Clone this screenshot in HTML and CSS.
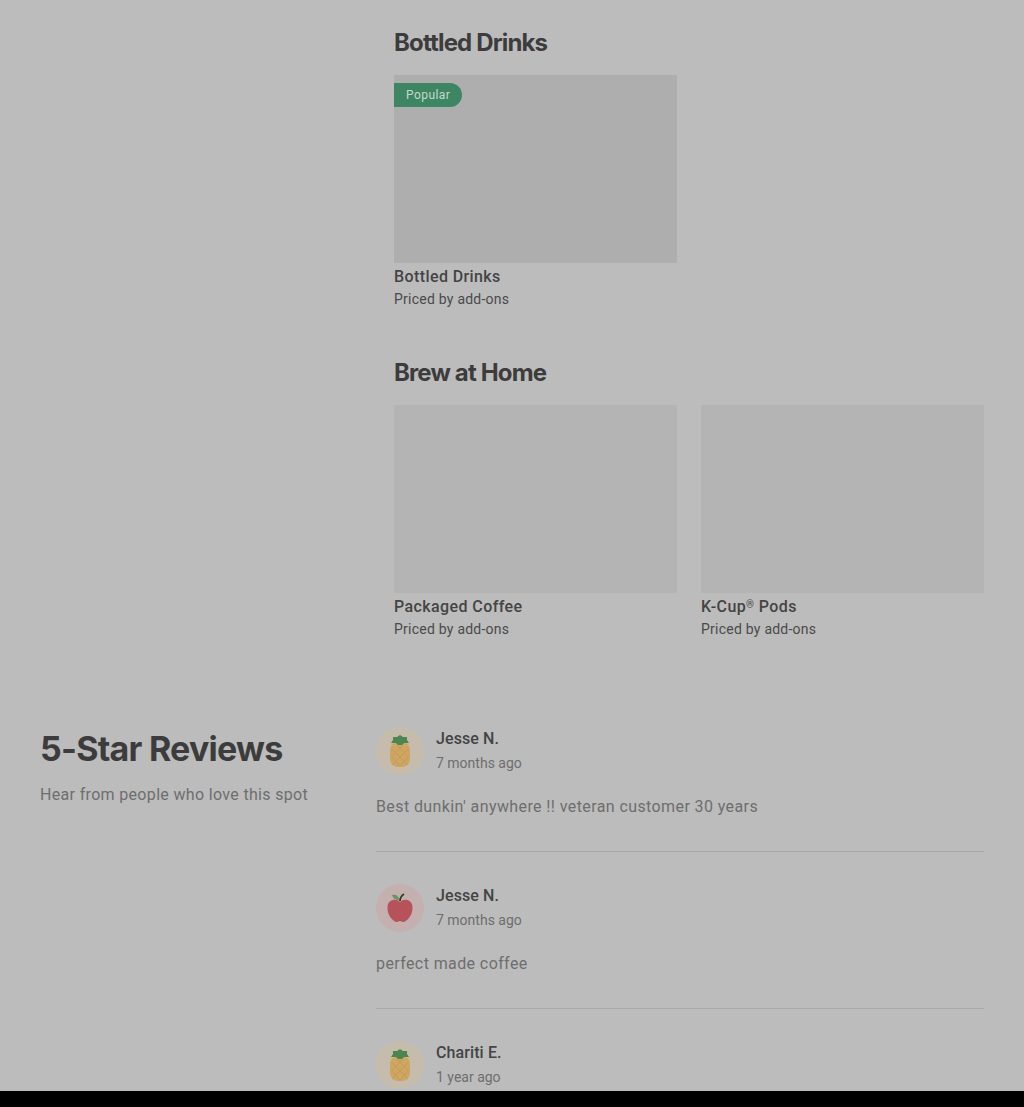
FILE: index.html
```html
<!DOCTYPE html>
<html>
<head>
    <title>Menu and Reviews</title>
    <link rel="stylesheet" href="styles.css">
</head>
<body>
    <div class="page">
        <div class="menu">
            <section class="menu-section">
                <h2>Bottled Drinks</h2>
                <div class="menu-grid">
                    <div class="item">
                        <div class="item-image image-dark"><span class="badge">Popular</span></div>
                        <div class="item-name">Bottled Drinks</div>
                        <div class="item-price">Priced by add-ons</div>
                    </div>
                </div>
            </section>
            <section class="menu-section">
                <h2>Brew at Home</h2>
                <div class="menu-grid">
                    <div class="item">
                        <div class="item-image"></div>
                        <div class="item-name">Packaged Coffee</div>
                        <div class="item-price">Priced by add-ons</div>
                    </div>
                    <div class="item">
                        <div class="item-image"></div>
                        <div class="item-name">K-Cup<span class="reg">®</span> Pods</div>
                        <div class="item-price">Priced by add-ons</div>
                    </div>
                </div>
            </section>
        </div>

        <div class="reviews">
            <div class="reviews-intro">
                <h1>5-Star Reviews</h1>
                <p>Hear from people who love this spot</p>
            </div>
            <div class="reviews-list">
                <div class="review">
                    <div class="review-head">
                        <div class="avatar avatar-pineapple">
                            <svg width="24" height="34" viewBox="0 0 24 34">
                                <rect x="2" y="8" width="20" height="25" rx="8" fill="#cfa562"/>
                                <path d="M4 15 L20 31 M4 23 L12 32 M9 11 L21 23 M20 15 L4 31 M20 23 L12 32 M15 11 L3 23" stroke="#c39a58" stroke-width="1"/>
                                <path d="M12 1 L15 3 L19 3 L19 6 L21 9 L16 9 L14 11 L10 11 L8 9 L3 9 L5 6 L5 3 L9 3 Z" fill="#4c8550"/>
                            </svg>
                        </div>
                        <div>
                            <div class="review-name">Jesse N.</div>
                            <div class="review-date">7 months ago</div>
                        </div>
                    </div>
                    <p class="review-text">Best dunkin' anywhere !! veteran customer 30 years</p>
                </div>
                <div class="review">
                    <div class="review-head">
                        <div class="avatar avatar-apple">
                            <svg width="28" height="30" viewBox="0 0 28 30">
                                <path d="M14 9 C10 5 2 6 1.500 14 C1 22 7 29 11 29 C12.500 29 13 28 14 28 C15 28 15.500 29 17 29 C21 29 27 22 26.500 14 C26 6 18 5 14 9 Z" fill="#b5525a"/>
                                <path d="M14 8 C14 5 15 3 18 1" stroke="#3a3a32" stroke-width="1.800" fill="none"/>
                                <path d="M13 7 C9 7 7 5 6 2 C10 1 13 3 13 7 Z" fill="#6b9560"/>
                            </svg>
                        </div>
                        <div>
                            <div class="review-name">Jesse N.</div>
                            <div class="review-date">7 months ago</div>
                        </div>
                    </div>
                    <p class="review-text">perfect made coffee</p>
                </div>
                <div class="review">
                    <div class="review-head">
                        <div class="avatar avatar-pineapple">
                            <svg width="24" height="34" viewBox="0 0 24 34">
                                <rect x="2" y="8" width="20" height="25" rx="8" fill="#cfa562"/>
                                <path d="M4 15 L20 31 M4 23 L12 32 M9 11 L21 23 M20 15 L4 31 M20 23 L12 32 M15 11 L3 23" stroke="#c39a58" stroke-width="1"/>
                                <path d="M12 1 L15 3 L19 3 L19 6 L21 9 L16 9 L14 11 L10 11 L8 9 L3 9 L5 6 L5 3 L9 3 Z" fill="#4c8550"/>
                            </svg>
                        </div>
                        <div>
                            <div class="review-name">Chariti E.</div>
                            <div class="review-date">1 year ago</div>
                        </div>
                    </div>
                </div>
            </div>
        </div>
    </div>
    <div class="bottom-bar"></div>
</body>
</html>
```

FILE: styles.css
```css
body {
    margin: 0;
    font-family: Roboto, "Liberation Sans", sans-serif;
    background-color: #bcbcbc;
    color: #3c3c3c;
}
.page {
    height: 1091px;
    overflow: hidden;
}
.bottom-bar {
    height: 16px;
    background-color: #000;
}
.menu {
    padding: 26px 40px 0 394px;
}
.menu-section {
    margin-bottom: 46px;
}
.menu-section h2 {
    margin: 0 0 16px;
    font-family: Inter, sans-serif;
    font-size: 24px;
    line-height: 33px;
    font-weight: 700;
    letter-spacing: -0.85px;
}
.menu-grid {
    display: grid;
    grid-template-columns: 283px 283px;
    column-gap: 24px;
}
.item-image {
    height: 188px;
    background-color: #b4b4b4;
    padding-top: 8px;
    box-sizing: border-box;
}
.image-dark {
    background-color: #aeaeae;
}
.badge {
    display: block;
    width: 68px;
    height: 24px;
    box-sizing: border-box;
    padding-left: 12px;
    background-color: #3e8663;
    border-radius: 0 12px 12px 0;
    color: #c4d8cc;
    font-size: 12px;
    line-height: 24px;
    letter-spacing: 0.45px;
}
.item-name {
    margin-top: 3px;
    font-size: 16px;
    line-height: 22px;
    font-weight: 500;
    letter-spacing: 0.4px;
    color: #444;
}
.reg {
    font-size: 10px;
    line-height: 0;
    vertical-align: 4px;
}
.item-price {
    font-size: 14px;
    line-height: 22px;
    color: #4a4a4a;
    letter-spacing: 0.24px;
}
.reviews {
    display: flex;
    margin-top: 87px;
    padding: 0 40px;
}
.reviews-intro {
    width: 336px;
    flex-shrink: 0;
}
.reviews-intro h1 {
    margin: 0;
    font-family: Inter, sans-serif;
    font-size: 34px;
    line-height: 44px;
    font-weight: 700;
    letter-spacing: -0.75px;
}
.reviews-intro p {
    margin: 13px 0 0;
    font-size: 16px;
    line-height: 22px;
    color: #6e6e6e;
    letter-spacing: 0.33px;
}
.reviews-list {
    flex: 1;
}
.review {
    padding-bottom: 33px;
    margin-bottom: 32px;
    border-bottom: 1px solid #a8a8a8;
}
.review:last-child {
    border-bottom: none;
    margin-bottom: 0;
}
.review-head {
    display: flex;
    align-items: center;
    gap: 12px;
}
.avatar {
    width: 48px;
    height: 48px;
    border-radius: 50%;
    display: flex;
    align-items: center;
    justify-content: center;
}
.avatar-pineapple {
    background-color: #c6bcab;
}
.avatar-apple {
    background-color: #c5b0b0;
}
.review-name {
    font-size: 16px;
    line-height: 22px;
    font-weight: 500;
    letter-spacing: 0.1px;
    color: #444;
}
.review-date {
    margin-top: 2px;
    font-size: 14px;
    line-height: 22px;
    color: #6e6e6e;
}
.review-text {
    margin: 21px 0 0;
    font-size: 16px;
    line-height: 22px;
    color: #6e6e6e;
    letter-spacing: 0.4px;
}
```
